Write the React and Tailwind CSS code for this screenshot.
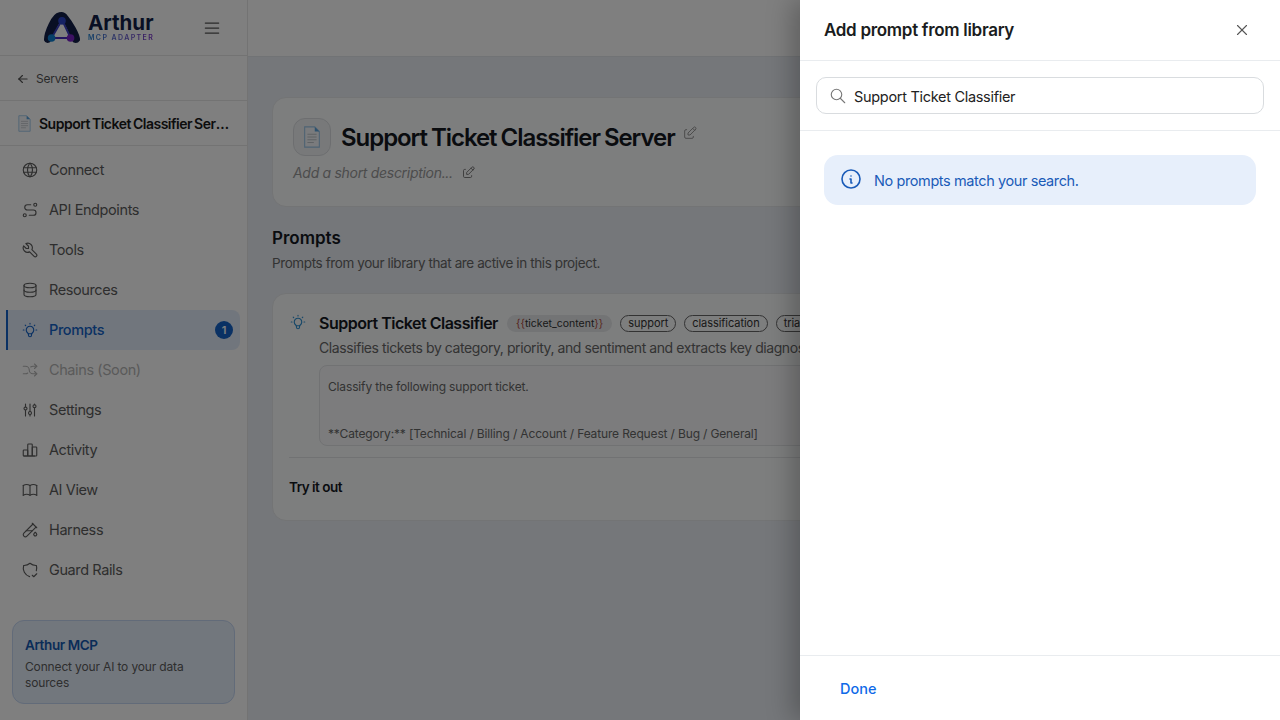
import React from "react";
import {
  TbWorld, TbRoute, TbTool, TbDatabase, TbBulb, TbArrowsShuffle, TbAdjustments, TbChartBar,
  TbBook, TbTestPipe, TbShieldCheck, TbMenu2, TbArrowLeft, TbEdit, TbSearch, TbInfoCircle, TbX,
} from "react-icons/tb";

const items = [
  ["Connect", TbWorld],
  ["API Endpoints", TbRoute],
  ["Tools", TbTool],
  ["Resources", TbDatabase],
  ["Prompts", TbBulb, "active"],
  ["Chains (Soon)", TbArrowsShuffle, "disabled"],
  ["Settings", TbAdjustments],
  ["Activity", TbChartBar],
  ["AI View", TbBook],
  ["Harness", TbTestPipe],
  ["Guard Rails", TbShieldCheck],
];

function Doc({ className }) {
  return (
    <svg viewBox="0 0 20 24" className={className} fill="none">
      <path d="M2 1h11l5 5v17H2z" fill="#f4f7fa" stroke="#9cc6e8" strokeWidth="1.2" />
      <path d="M13 1v5h5z" fill="#5ba2dc" />
      <path d="M5 9h10M5 12h10M5 15h10M5 18h7" stroke="#b9bec4" strokeWidth="1" />
    </svg>
  );
}

function Logo() {
  return (
    <div className="flex items-center gap-[6px]">
      <svg viewBox="0 0 40 34" className="w-[38px] h-[33px]" fill="none">
        <path d="M2 30 C2 22 10 3 17 2 C20 1 23 2 25 5 C30 11 38 24 38 30 C36 33 33 33 31 30 C28 22 24 11 20 9 C16 11 11 22 8 30 C6 33 3 33 2 30Z" fill="#121f48" stroke="#121f48" strokeWidth="2" />
        <path d="M20 9 L9 28 L29 28 Z" stroke="#3a3fc0" strokeWidth="2" />
        <path d="M9 28h20" stroke="#4a2cc0" strokeWidth="2" />
        <circle cx="20" cy="10" r="4" fill="#2b45c8" />
        <circle cx="9" cy="28" r="4" fill="#0f7fd0" />
        <circle cx="29" cy="28" r="4" fill="#7a22c8" />
      </svg>
      <div className="flex flex-col -mt-[1px] ml-[1px]">
        <span className="text-[20.5px] leading-[20px] font-bold text-[#121f48]">Arthur</span>
        <span className="text-[7px] leading-[8px] mt-[1px] font-semibold tracking-[1.4px] whitespace-nowrap bg-gradient-to-r from-[#1580d0] to-[#7a30c8] bg-clip-text text-transparent">MCP ADAPTER</span>
      </div>
    </div>
  );
}

function Sidebar() {
  return (
    <aside className="w-[248px] shrink-0 h-full bg-white border-r border-[#e6e6e6] flex flex-col">
      <div className="h-[56px] shrink-0 border-b border-[#e6e6e6] flex items-center pl-[43px]">
        <Logo />
        <TbMenu2 className="ml-[48px] size-[20px] text-[#555]" strokeWidth={1.5} />
      </div>
      <div className="h-[45px] shrink-0 border-b border-[#e6e6e6] flex items-center pl-[16px] pt-[1px] gap-[6px] text-[12px] tracking-[-0.2px] text-[#555]">
        <TbArrowLeft className="size-[14px]" />
        <span>Servers</span>
      </div>
      <div className="h-[45px] shrink-0 border-b border-[#e6e6e6] flex items-center pl-[16px] pr-[16px] gap-[6px]">
        <Doc className="w-[17px] h-[17px] shrink-0" />
        <span className="truncate text-[14px] tracking-[-0.5px] font-semibold text-[#1a1a1a] [word-spacing:-1px]">Support Ticket Classifier Server</span>
      </div>
      <nav className="flex flex-col pt-[4px] pl-[6px] pr-[7px]">
        {items.map(([label, Icon, state]) => (
          <div
            key={label}
            className={
              "h-[40px] flex items-center pr-[7px] gap-[10px] text-[14.5px] tracking-[-0.4px] " +
              (state === "active"
                ? "pl-[13px] bg-[#e3edfa] border-l-2 border-[#1463c8] rounded-r-[8px] text-[#1463c8] font-medium"
                : state === "disabled"
                ? "pl-[15px] text-[#b5b5b5]"
                : "pl-[15px] text-[#5c5c5c]")
            }
          >
            <Icon className="size-[18px] shrink-0" strokeWidth={1.5} />
            <span className="flex-1">{label}</span>
            {state === "active" && (
              <span className="size-[18px] rounded-full bg-[#1463c8] text-white text-[11px] font-semibold flex items-center justify-center">1</span>
            )}
          </div>
        ))}
      </nav>
      <div className="mt-auto mx-[12px] mb-[16px] h-[84px] rounded-[12px] border border-[#c4d6f2] bg-[#e5eefb] px-[12px] pt-[14px]">
        <div className="text-[13.5px] tracking-[-0.4px] leading-[20px] font-semibold text-[#1458b0]">Arthur MCP</div>
        <div className="text-[12px] tracking-[-0.15px] leading-[16px] mt-[4px] text-[#5c5c5c]">Connect your AI to your data sources</div>
      </div>
    </aside>
  );
}

function Tag({ children }) {
  return <span className="h-[17px] px-[7px] rounded-full border border-[#666] text-[11px] tracking-[-0.05px] leading-[15px] text-[#333] shrink-0">{children}</span>;
}

function Main() {
  return (
    <main className="flex-1 min-w-0 h-full flex flex-col bg-[#eaeef4] overflow-hidden">
      <div className="h-[57px] shrink-0 bg-white border-b border-[#e2e6ea]" />
      <div className="px-[24px] pt-[40px] flex flex-col">
        <section className="h-[110px] bg-[#fbfcfd] border border-[#e6e8ea] rounded-[14px] px-[20px] pt-[20px]">
          <div className="flex items-center gap-[10px]">
            <div className="size-[38px] rounded-[12px] border border-[#dadde0] bg-[#f1f3f5] flex items-center justify-center">
              <Doc className="w-[20px] h-[22px]" />
            </div>
            <h1 className="text-[24px] leading-[34px] pt-[1px] font-semibold tracking-[-1.05px] text-[#14181f] [word-spacing:-1px]">Support Ticket Classifier Server</h1>
            <TbEdit className="size-[16px] text-[#999] -mt-[8px] -ml-[3px]" strokeWidth={1.5} />
          </div>
          <div className="flex items-center gap-[8px] mt-[6px] text-[14px] tracking-[-0.3px] italic text-[#999]">
            <span>Add a short description...</span>
            <TbEdit className="size-[15px] text-[#777]" strokeWidth={1.5} />
          </div>
        </section>
        <h2 className="mt-[20px] text-[17px] leading-[22px] font-semibold text-[#14181f]">Prompts</h2>
        <p className="mt-[4px] text-[13.5px] tracking-[-0.4px] leading-[20px] text-[#666]">Prompts from your library that are active in this project.</p>
        <section className="mt-[20px] h-[228px] bg-[#fbfcfd] border border-[#e6e8ea] rounded-[14px] px-[16px] pt-[17px]">
          <div className="flex gap-[12px]">
            <TbBulb className="size-[18px] text-[#2c8fd0] shrink-0 mt-[2px]" strokeWidth={1.5} />
            <div className="flex-1 min-w-0">
              <div className="flex items-center gap-[8px] h-[24px] whitespace-nowrap overflow-hidden">
                <span className="text-[16px] tracking-[-0.5px] font-semibold text-[#14181f] mr-[1px]">Support Ticket Classifier</span>
                <span className="h-[17px] px-[9px] rounded-full bg-[#e6e8ea] text-[10.5px] leading-[17px] text-[#333] shrink-0"><span className="text-[#b04a3a]">{"{{"}</span>ticket_content<span className="text-[#b04a3a]">{"}}"}</span></span>
                <Tag>support</Tag>
                <Tag>classification</Tag>
                <Tag>triage</Tag>
              </div>
              <p className="mt-[3px] text-[14px] tracking-[-0.42px] leading-[20px] text-[#666] whitespace-nowrap">Classifies tickets by category, priority, and sentiment and extracts key diagnostic details.</p>
              <div className="mt-[7px] h-[81px] border border-[#e2e4e6] rounded-[8px] bg-[#f8f9fa] px-[8px] pt-[9px] overflow-hidden text-[12px] tracking-[-0.15px] leading-[23.5px] text-[#666] whitespace-pre">
                {"Classify the following support ticket.\n\n**Category:** [Technical / Billing / Account / Feature Request / Bug / General]"}
              </div>
            </div>
          </div>
          <div className="mt-[11px] border-t border-[#e2e4e6] pt-[19px] text-[13.5px] tracking-[-0.5px] leading-[20px] font-semibold text-[#14181f]">Try it out</div>
        </section>
      </div>
    </main>
  );
}

function Drawer() {
  return (
    <div className="absolute top-0 right-0 bottom-0 w-[480px] bg-white flex flex-col shadow-[-8px_0_24px_rgba(0,0,0,0.25)] z-20">
      <div className="h-[61px] shrink-0 border-b border-[#e9ecef] flex items-center justify-between pl-[24px] pr-[29px]">
        <span className="text-[17px] tracking-[-0.3px] pt-[1px] font-semibold text-[#1a1c20]">Add prompt from library</span>
        <TbX className="size-[18px] text-[#555]" strokeWidth={1.5} />
      </div>
      <div className="h-[70px] shrink-0 border-b border-[#e9ecef] px-[16px] pt-[16px]">
        <div className="h-[37px] border border-[#d9dcdf] rounded-[10px] flex items-center pl-[12px] gap-[7px] text-[14.5px] tracking-[-0.3px] text-[#222]">
          <TbSearch className="size-[18px] text-[#777]" strokeWidth={1.5} />
          <span className="pt-[2px] leading-[20px]">Support Ticket Classifier</span>
        </div>
      </div>
      <div className="flex-1 px-[24px] pt-[24px]">
        <div className="h-[50px] rounded-[14px] bg-[#e7effb] flex items-center pl-[15px] gap-[11px] text-[14.5px] tracking-[-0.4px] text-[#1a5bb8]">
          <TbInfoCircle className="size-[24px] -mt-[3px]" strokeWidth={1.6} />
          <span className="pt-[2px] leading-[20px]">No prompts match your search.</span>
        </div>
      </div>
      <div className="h-[65px] shrink-0 border-t border-[#e9ecef] flex items-center pl-[40px] pt-[2px] text-[14.5px] font-medium text-[#0f6ae8]">Done</div>
    </div>
  );
}

export default function App() {
  return (
    <div className="relative w-[1280px] h-[720px] overflow-hidden flex font-['Inter',sans-serif]">
      <Sidebar />
      <Main />
      <div className="absolute inset-0 bg-black/50 z-10" />
      <Drawer />
    </div>
  );
}
